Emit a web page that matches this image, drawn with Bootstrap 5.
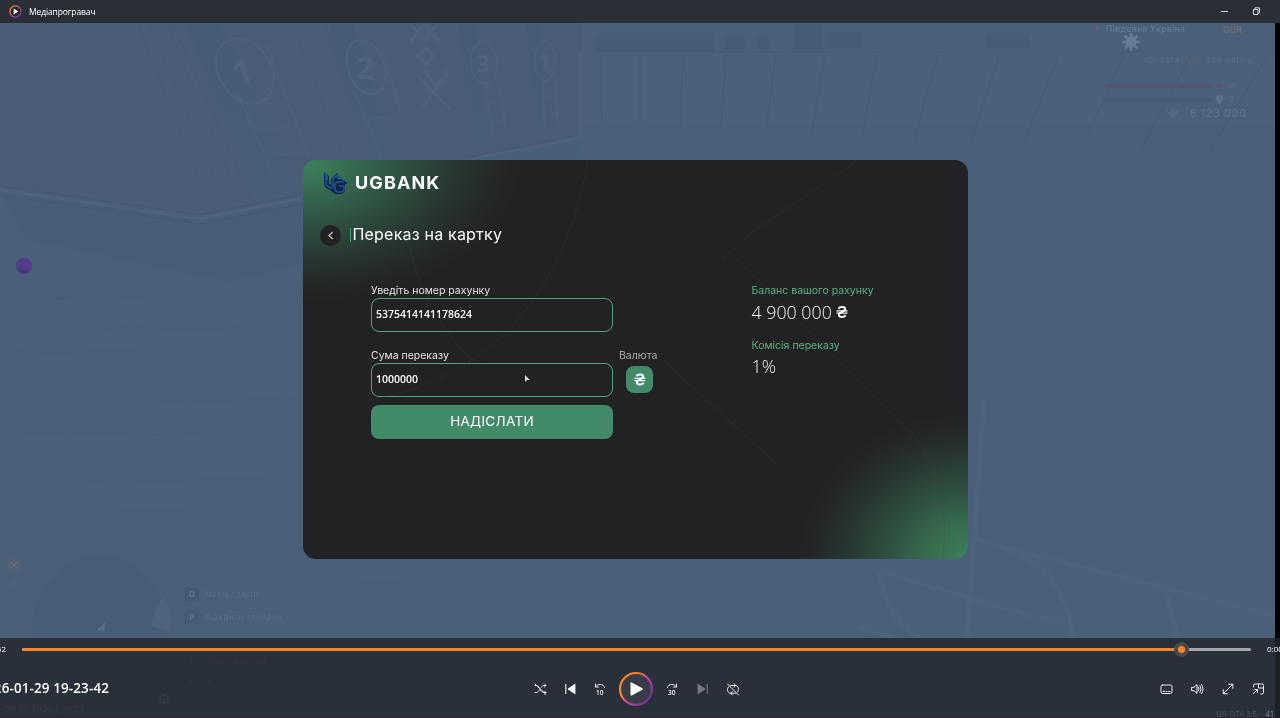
<!DOCTYPE html>
<html lang="uk">
<head>
<meta charset="utf-8">
<meta name="viewport" content="width=device-width, initial-scale=1">
<title>Медіапрогравач</title>
<link rel="stylesheet" href="https://cdn.jsdelivr.net/npm/bootstrap@5.3.0/dist/css/bootstrap.min.css">
<style>
body{background:#2a3039;color:#fff;font-family:"Open Sans","Noto Sans",sans-serif;line-height:1}
.scene{z-index:0;pointer-events:none}
.titlebar{height:22.500px;z-index:1;font-size:8.500px;letter-spacing:-.12px;background:#2a2e37;width:1280px}
.stage{height:614.500px;z-index:1}
.bank{width:665px;height:399px;margin:137px 0 0 303px;border-radius:13px;overflow:hidden;font-family:Inter,"Open Sans",sans-serif;
background:radial-gradient(ellipse 225px 145px at 0 0,#3e835d 0,#376d51 20%,#2e4f40 46%,#28372f 68%,#242927 85%,rgba(34,33,35,0) 100%),radial-gradient(ellipse 175px 150px at 100% 100%,#3e7f5d 0,#386d50 22%,#2e4e3e 48%,#27362f 70%,#242826 86%,rgba(34,33,35,0) 100%),#222123}
.bank-head{height:46px;padding-left:20px}
.brand{font-weight:700;font-size:18px;letter-spacing:1.100px;margin-left:6px}
.back{width:21px;height:21px;background:#222123;border:0;padding:0}
.page-line{height:21px;margin:19px 0 0 17px}
.bar-mark{width:1.500px;height:14px;background:#3f9d70;margin-left:8.500px}
.page-title{font-size:16px;font-weight:400;margin:0 0 0 1.500px;letter-spacing:.2px}
.cols{margin:38px 0 0 68px}
.form-col{width:242px}
.lbl{font-size:10.500px;height:13px;line-height:13px;margin:0;white-space:nowrap;color:#e4e4e4;display:block}
.entry{height:34px;border:1.400px solid #4fa57b!important;border-radius:8px;background:transparent!important;color:#fff!important;font:600 10.500px "Open Sans",sans-serif;padding:0 4px 1px;box-shadow:none!important}
.send{height:34px;background:#438b68!important;border:0;border-radius:8px;color:#fff;font-size:13.500px;letter-spacing:.3px;padding:0;margin-top:8px}
.cur-col{width:40px;margin:65px 0 0 6px}
.cur{width:27px;height:27px;border-radius:8px;background:#438b68;margin:4px 0 0 7px}
.info{margin-left:92.500px}
.grn{color:#56b584}
.amount{font:300 17.800px "Open Sans",sans-serif;color:#f2f2f2;line-height:20px;white-space:nowrap}
.player{height:81px;z-index:1;width:1280px}
.seek{height:24px;font-size:8px}
.t-left{width:6px;justify-content:flex-end}
.track{width:1229px;height:3px;background:#a4a6aa;border-radius:2px;margin-left:16px}
.fill{height:3px;background:#fa842f;border-radius:2px}
.knob{width:15px;height:15px;border-radius:50%;background:#494a4e;top:-6px;left:1152px}
.knob i{width:7px;height:7px;border-radius:50%;background:#ff842e}
.ctl{height:56px}
.fname{width:109px;font-size:13.400px;font-weight:600;letter-spacing:.15px}
.group{margin-left:416px}
.ib{width:30px;height:36px;display:flex;align-items:center;justify-content:center;background:none;border:0;padding:0;color:#eceef0}
.ib.big{width:42px}
.rgroup{margin-left:404px}
.rgroup .ib{width:30.700px}
.ic{fill:none;stroke:currentColor;stroke-width:1;stroke-linecap:round;stroke-linejoin:round}
</style>
</head>
<body class="overflow-hidden vh-100 position-relative">

<svg class="scene position-absolute top-0 start-0" width="1280" height="718" viewBox="0 0 1280 718">
  <defs>
    <clipPath id="view"><rect x="0" y="22" width="1275" height="616"/></clipPath>
    <filter id="soft" color-interpolation-filters="sRGB"><feGaussianBlur stdDeviation=".7"/></filter>
    <linearGradient id="dim" x2="0" y2="1"><stop offset="0" stop-color="#465b76"/><stop offset="1" stop-color="#495e77"/></linearGradient>
  </defs>
  <rect y="22" width="1275" height="616" fill="#4c5f78"/>
  <g clip-path="url(#view)" filter="url(#soft)" opacity=".8">
    <path d="M0 22H582V132L303 195 200 214 0 186Z" fill="#4b5d76"/>
    <path d="M185 22h34L310 205 255 198Z M328 22h24L398 160H372Z M458 22h18l12 130h-12Z M526 22h14l6 110h-10Z" fill="url(#dim)"/>
    <path d="M0 190L200 221 303 200V262L232 282 25 239Z" fill="#485e78"/>
    <path d="M468 159L582 137V159Z" fill="#485f79"/>
    <path d="M0 186L200 215 303 194M400 172L582 134M0 195L200 224 303 204" fill="none" stroke="#43566e" stroke-width="1"/>
    <path d="M0 190L200 219 303 198M450 163L582 138" fill="none" stroke="#50637c" stroke-width="3"/>
    <path d="M137 22L205 196M148 22L220 190M166 22L238 195M172 22L250 197M90 22L150 140M291 22L345 160M324 22L372 160" fill="none" stroke="#455972" stroke-width="1" opacity=".6"/>
    <g fill="none" stroke="#4f637c">
      <ellipse cx="245" cy="71" rx="26" ry="35" transform="rotate(-32 245 71)" stroke-width="2"/>
      <ellipse cx="366" cy="67" rx="18" ry="28" transform="rotate(-20 366 67)" stroke-width="2"/>
      <ellipse cx="484" cy="63" rx="13" ry="21" transform="rotate(-8 484 63)" stroke-width="1.500"/>
      <ellipse cx="545" cy="61" rx="10" ry="20" stroke-width="1.500"/>
      <path d="M237 92L273 174M266 44L309 156M251 106l31-3M258 130l33-2M268 156l35-4M354 90L382 158M382 48L400 110M370 118h24M377 140h22M486 84l6 52M500 86l5 40M488 104h14M490 122h14M542 82l3 45M556 80l2 45M544 98h13M546 113h12" stroke-width="3" opacity=".7"/>
    </g>
    <g fill="#51657e" font-family="Open Sans,sans-serif" font-weight="700">
      <text x="232" y="84" font-size="35" transform="rotate(-18 243 71)">1</text>
      <text x="356" y="79" font-size="31">2</text><text x="476" y="72" font-size="24">3</text><text x="539" y="69" font-size="22">1</text>
    </g>
    <path d="M412 26l12 14 12-14M410 42l14-18 16 18M418 56l8-8 8 8-8 8zM418 76l32 34M448 74L422 108M424 70l12 16 12-16" fill="none" stroke="#4f637c" stroke-width="3"/>
    <path d="M596 34h118v18H596zM725 36h20v14h-20zM757 36h12v14h-12zM793 24h28v26h-28zM828 32h35v16h-35z M985 34h44v14h-44z" fill="#485c76"/>
    <rect x="579" y="52" width="696" height="586" fill="#4d6079"/>
    <rect x="579" y="52" width="696" height="72" fill="#4d617a"/>
    <path d="M579 52H1275" stroke="#455a73"/>
    <path d="M600 54L602 122M640 54V124M683 54L680 126M726 54L721 128M776 54L766 130M825 54L812 132M877 54L862 138M938 54L914 142M999 56L971 140M1058 56L1024 142M1124 56L1084 142M1190 56L1142 148M1267 56L1209 152" stroke="#475a74" fill="none"/>
    <g stroke="#485b74" opacity=".4" fill="none">
      <path d="M30 300c40-5 70 3 120-5M10 350c60 8 90-4 140 3M100 330c40-8 90 6 150-5M160 400c50 6 80-4 140 0M20 435c70-8 110 5 180-2M80 480c60 8 110-5 190 0M10 510c60-8 120 5 180 0M600 136c80 6 150-4 230 3M850 145c70-5 150 8 200 0M1000 180c60-7 130 6 240-1M990 250c80 7 150-6 260 2M1000 330c70-8 140 4 230-3M985 410c80 8 170-4 270 3M1000 490c70-8 120 5 230-1M330 580c80 7 140-6 220 0M590 610c90-8 150 7 240 0"/>
    </g>
    <g fill="none" stroke="#50657e" stroke-width="5" opacity=".7">
      <path d="M984 400L967 638"/>
      <path d="M880 571C940 588 1000 611 1065 622M975 540L1165 588 1275 616M975 540C1040 550 1070 590 1072 638M880 571C882 605 900 625 920 638M1165 590L1177 638M860 627l35 11"/>
    </g>
    <path d="M32 638C28 585 70 552 105 556 145 560 170 595 168 638Z" fill="#485d78"/>
    <path d="M151 626q4-20 12-29 9 15 7 34z" fill="#50657e"/><path d="M96 631l9-9-1 10-3-2z" fill="#5d728b"/>
    <circle cx="14" cy="565" r="7" fill="#56626f"/><path d="M11 562l6 6m0-6l-6 6" stroke="#6b7680"/>
  </g>
  <circle cx="24" cy="266" r="8" fill="#4f3e87"/><path d="M17 268a7 7 0 0 0 13 1q-3 4-13-1z" fill="#393d69"/><path d="M20 262l4 2 4-3 2 5-4 3-5-2z" fill="#5d3892"/>
  <g font-family="Inter,sans-serif" fill="#5a6f87">
    <text x="1106" y="32" font-size="8.500" font-weight="600" textLength="79" fill="#61768e">Південна Україна</text>
    <text x="1145" y="63" font-size="7.500" textLength="38">ID: 59141</text>
    <text x="1206" y="63" font-size="7.500" textLength="46">365 online</text>
    <text x="1229" y="88" font-size="7.500">91</text><text x="1229" y="102" font-size="7.500">0</text>
    <text x="1190" y="117" font-size="10.500" font-weight="500" textLength="56" fill="#5e738b">6 123 000</text>
    <text x="1223" y="33" font-size="9" font-weight="700" fill="#626e72">GÜR</text>
    <text x="14" y="586" font-size="6" text-anchor="middle" fill="#5f6c79">0</text>
    <text x="205" y="597" font-size="7.500" textLength="55">Меню гравця</text>
    <text x="205" y="620" font-size="7.500" textLength="77">Відкрити телефон</text>
  </g>
  <path d="M1097 25l3 3-3 5-3-5z" fill="#565f7b"/>
  <g fill="none" stroke="#667c95" stroke-width="2.500" stroke-linecap="round"><path d="M1131 34v16M1123 42h16M1125.500 36.500l11 11M1136.500 36.500l-11 11"/></g><circle cx="1131" cy="42" r="5.500" fill="#667c95"/>
  <circle cx="1197" cy="60" r="2.500" fill="#586171"/>
  <rect x="1104" y="83.500" width="108" height="4.500" rx="2" fill="#525570"/><rect x="1104" y="97.500" width="108" height="4.500" rx="2" fill="#475a73"/>
  <path d="M1216 86h7M1219.500 82.500v7" stroke="#575470" stroke-width="2.500"/><path d="M1216 96l4-1 3 1v4l-3 4-4-4z" fill="#5b7189"/>
  <path d="M1167 113l6-5 6 3-5 7z" fill="#54697f"/>
  <g fill="#485b74"><rect x="184" y="587" width="15" height="15"/><rect x="184" y="610" width="15" height="14"/></g>
  <g font-family="Inter,sans-serif" font-weight="600" font-size="7.500" fill="#667a91"><text x="189" y="597">O</text><text x="189.500" y="619.500">P</text></g>
  <rect x="1275" y="22" width="5" height="616" fill="#000"/>
  <rect x="1275" y="638" width="5" height="80" fill="#1d1f22"/>
  <g font-family="Inter,sans-serif" font-size="7" fill="#353b44">
    <text x="189" y="664">T</text><text x="206" y="664" textLength="60" fill="#31363f">Текстовий чат</text>
    <text x="190" y="683">L</text><text x="206" y="683">J</text><text x="5" y="712" font-size="8" textLength="80" fill="#343941">29.01.2026 | 18:23</text>
    <circle cx="164" cy="699" r="4" fill="none" stroke="#333942" stroke-width="2"/>
    <text x="1216" y="716.500" font-size="8" textLength="41" fill="#4c525c">UA-GTA 3.5</text>
    <text x="1265" y="716.500" font-size="8" fill="#777b80">41</text>
  </g>
  <path d="M0 717.500H1275" stroke="#292736"/>
</svg>

<header class="titlebar position-relative d-flex align-items-center">
  <svg width="13" height="13" viewBox="0 0 13 13" style="margin-left:9px">
    <defs><linearGradient id="ring" x1="0" y1="0" x2="1" y2="1"><stop offset=".25" stop-color="#f98325"/><stop offset=".6" stop-color="#b63a9c"/><stop offset="1" stop-color="#653198"/></linearGradient></defs>
    <circle cx="6.500" cy="6.500" r="5.600" fill="#24242c" stroke="url(#ring)" stroke-width="1.200"/><path d="M4.700 3.500v6l4.500-3z" fill="#fff"/>
  </svg>
  <span style="margin-left:7px;padding-top:1px">Медіапрогравач</span>
  <svg class="ms-auto" width="40" height="12" viewBox="0 0 40 12" fill="none" stroke="#d5d6d8" style="margin-right:19px"><path d="M0 6.500h7"/><path d="M32.500 4.500h4.500v5h-4.500zM34 4V2.800h4.500V8h-1"/></svg>
</header>

<main class="stage position-relative d-flex align-items-start">
  <section class="bank position-relative">
    <div class="bank-head d-flex align-items-center">
      <svg width="26" height="24" viewBox="0 0 26 24">
        <path d="M1 1l5 4v8l2 1V8l6-6 2 4 5 2 4 4-3 1v7l-3 3h-7l-5-4-4-2-2-4z" fill="#102447"/>
        <path d="M3 4v9l1 2 4 2 2-2V8l4-4 1 4M21 11h-7l-2 2v6l2 2h5l2-2v-4h-5" fill="none" stroke="#1a559c" stroke-width="1.600"/>
        <path d="M1.500 2L4 5v4M15 7l6 1.500 3 3" fill="none" stroke="#2a9dd0" stroke-width=".8"/>
      </svg>
      <span class="brand">UGBANK</span>
    </div>
    <div class="page-line d-flex align-items-center">
      <button class="back rounded-circle d-flex align-items-center justify-content-center" aria-label="Назад"><svg width="6" height="9" viewBox="0 0 6 9" fill="none" stroke="#ccc" stroke-width="1.200"><path d="M4.700 1L1 4.500 4.700 8"/></svg></button>
      <span class="bar-mark"></span>
      <h1 class="page-title">Переказ на картку</h1>
    </div>
    <div class="cols d-flex align-items-start">
      <form class="form-col">
        <label class="lbl" for="acc">Уведіть номер рахунку</label>
        <input class="entry form-control" id="acc" value="5375414141178624" style="margin-top:1px">
        <label class="lbl" for="sum" style="margin-top:17px">Сума переказу</label>
        <input class="entry form-control" id="sum" value="1000000" style="margin-top:1px">
        <button type="button" class="send btn w-100">НАДІСЛАТИ</button>
      </form>
      <div class="cur-col">
        <span class="lbl" style="color:#aaa">Валюта</span>
        <span class="cur d-flex align-items-center justify-content-center">
          <svg width="12" height="13" viewBox="0 0 12 13" fill="none" stroke="#fff"><path stroke-width="2" d="M2.500 3.200C3.600.9 9 .7 9.200 3.600 9.200 6.200 2.900 6.500 2.900 9.200c0 3 5.400 2.700 6.700.5"/><path stroke-width="1.300" d="M.5 5.300h11M.5 7.700h11"/></svg>
        </span>
      </div>
      <div class="info">
        <div class="lbl grn">Баланс вашого рахунку</div>
        <div class="amount d-flex align-items-center" style="margin-top:5px"><span>4 900 000</span>
          <svg width="12" height="14" viewBox="0 0 12 13" fill="none" stroke="#fff" style="margin-left:4px"><path stroke-width="2" d="M2.500 3.200C3.600.9 9 .7 9.200 3.600 9.200 6.200 2.900 6.500 2.900 9.200c0 3 5.400 2.700 6.700.5"/><path stroke-width="1.300" d="M.5 5.300h11M.5 7.700h11"/></svg></div>
        <div class="lbl grn" style="margin-top:17px">Комісія переказу</div>
        <div class="amount" style="margin-top:4px">1%</div>
      </div>
    </div>
    <svg class="position-absolute" style="left:221px;top:214px" width="7" height="10" viewBox="0 0 7 10"><path d="M1 1v7l2-2 3 0z" fill="#ddd8ee"/></svg>
    <svg class="position-absolute top-0 start-0 pe-none" width="665" height="399" fill="none" stroke="#4a4a42" opacity=".22"><path d="M285 0C260 150 170 220 75 238M105 0C95 70 110 150 180 210M420 100L445 75 555 0M430 95L600 265Q650 310 640 399M360 200L480 310"/></svg>
  </section>
</main>

<footer class="player position-relative overflow-hidden">
  <div class="seek d-flex align-items-center">
    <span class="t-left d-flex flex-shrink-0">0:00:52</span>
    <div class="track position-relative flex-shrink-0"><div class="fill" style="width:94.400%"></div>
      <span class="knob position-absolute d-flex align-items-center justify-content-center"><i></i></span></div>
    <span style="margin-left:16px">0:00:03</span>
  </div>
  <div class="ctl d-flex align-items-center">
    <div class="fname d-flex justify-content-end text-nowrap flex-shrink-0">2026-01-29 19-23-42</div>
    <div class="group d-flex align-items-center flex-shrink-0">
      <button class="ib" aria-label="Перемішати"><svg class="ic" width="13" height="12" viewBox="0 0 13 12"><path d="M1 2.500h1.500c3 0 4 7 7 7H12M1 9.500h1.500c1.300 0 2.200-1.200 3-2.700M7.300 4.200c.6-1 1.300-1.700 2.200-1.700H12M10.500 1L12 2.500 10.500 4M10.500 8L12 9.500 10.500 11M1 1l10.500 10"/></svg></button>
      <button class="ib" aria-label="Попередній"><svg width="11" height="12" viewBox="0 0 11 12"><path d="M10.400 1.300v9.400q0 .8-.7.400L3 6.500Q2.500 6 3 5.500L9.700.9q.7-.4.7.4z" fill="#fff"/><path d="M.8 1v10" stroke="#fff"/></svg></button>
      <button class="ib" aria-label="Назад на 10 секунд"><svg class="ic" width="12" height="12" viewBox="0 0 12 12"><path d="M1.500 1v3h3M1.500 4C3.500.3 9.300.3 10.600 4.700"/><text x="2" y="11.500" font-size="6.500" font-weight="600" fill="#eee" stroke="none" font-family="Open Sans">10</text></svg></button>
      <button class="ib big" aria-label="Відтворити"><svg class="flex-shrink-0" width="36" height="36" viewBox="0 0 36 36">
        <defs><linearGradient id="pr" x1=".1" y1=".15" x2=".95" y2=".8"><stop offset=".25" stop-color="#f98325"/><stop offset=".55" stop-color="#c6439b"/><stop offset="1" stop-color="#703196"/></linearGradient></defs>
        <circle cx="18" cy="18" r="16" fill="#383c46" stroke="url(#pr)" stroke-width="2.200"/><path d="M12.500 12.300v11.400q0 1.300 1.300.7l10.600-5.700q1-.7 0-1.400L13.800 11.600q-1.300-.6-1.300.7z" fill="#fff"/></svg></button>
      <button class="ib" aria-label="Вперед на 30 секунд"><svg class="ic" width="12" height="12" viewBox="0 0 12 12"><path d="M10.500 1v3h-3M10.500 4C8.500.3 2.700.3 1.400 4.700"/><text x="2" y="11.500" font-size="6.500" font-weight="600" fill="#eee" stroke="none" font-family="Open Sans">30</text></svg></button>
      <button class="ib" aria-label="Наступний"><svg width="11" height="12" viewBox="0 0 11 12"><path d="M.6 1.300v9.400q0 .8.7.4L8 6.500Q8.500 6 8 5.500L1.300.9Q.6.500.6 1.300z" fill="#777b81"/><path d="M10.200 1v10" stroke="#777b81"/></svg></button>
      <button class="ib" style="width:32px" aria-label="Без повтору"><svg class="ic" width="14" height="13" viewBox="0 0 14 13"><path d="M4.500 2.500h4.800c3.500 0 4 5 2.200 6.500M8 .800L9.700 2.500 8 4.200M9.500 10.200H4.700C1 10.200.6 5 2.700 3.600M6.200 8.500L4.500 10.200 6.200 12M1.500 1l11 11"/></svg></button>
    </div>
    <div class="rgroup d-flex flex-shrink-0" style="margin-left:402px">
      <button class="ib" aria-label="Субтитри"><svg class="ic" width="13" height="11" viewBox="0 0 13 11"><rect x="1" y="1" width="11" height="8.500" rx="1.500"/><path d="M3 7.500h1.500M6 7.500h1M8.500 7.500H10"/></svg></button>
      <button class="ib" aria-label="Гучність"><svg class="ic" width="13" height="12" viewBox="0 0 13 12"><path d="M1 4.300h2L6 1.500v9L3 7.700H1zM7.500 4q1.300 2 0 4M9 2.600q2.300 3.400 0 6.800M10.500 1.300q3.200 4.700 0 9.400"/></svg></button>
      <button class="ib" aria-label="На весь екран"><svg class="ic" width="12" height="12" viewBox="0 0 12 12"><path d="M1.500 10.500l9-9M6.700 1.200h4.100v4.100M1.200 6.700v4.100h4.100"/></svg></button>
      <button class="ib" aria-label="Міні-програвач"><svg class="ic" width="13" height="12" viewBox="0 0 13 12"><path d="M1.500 4V2.500Q1.500 1 3 1H10q1.500 0 1.500 1.500v7Q11.500 11 10 11H8.500M6.500 1v4h5M1.500 10.500l4-4M2.500 6.500h3v3"/></svg></button>
    </div>
  </div>
</footer>
<script src="https://cdn.jsdelivr.net/npm/bootstrap@5.3.0/dist/js/bootstrap.bundle.min.js"></script>
</body>
</html>
